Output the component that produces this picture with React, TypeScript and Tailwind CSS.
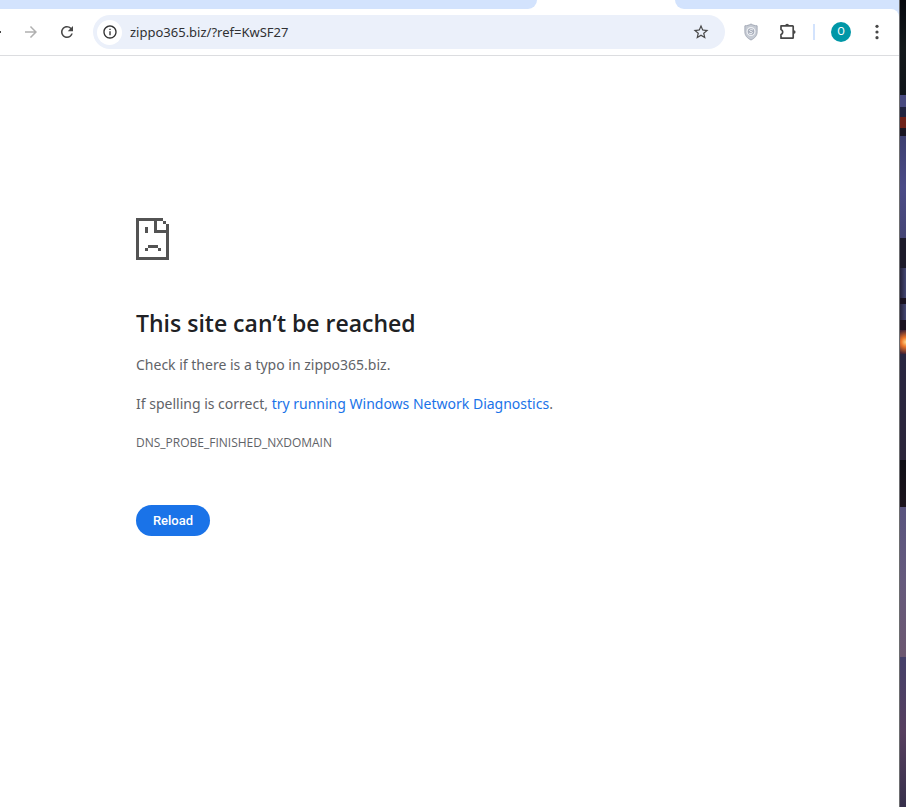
import React from 'react';
import { MdArrowForward, MdRefresh, MdInfoOutline, MdStarBorder } from 'react-icons/md';

const PuzzleIcon = () => (
  <svg viewBox="0 0 18 18" className="h-[18px] w-[18px]" fill="none" stroke="#474747" strokeWidth="1.7" strokeLinejoin="round">
    <path d="M2 2.900h11.600a.6.6 0 0 1 .6.6v11.100a.6.6 0 0 1-.6.6H2v-3.600c2.300-.8 2.300-4.300 0-5.100z" />
    <path d="M6.200 2.600a1.900 1.900 0 0 1 3.800 0zM14.800 7.300a1.800 1.800 0 0 1 0 3.600z" fill="#474747" stroke="none" />
  </svg>
);

const ShieldIcon = () => (
  <svg viewBox="0 0 14 18" className="h-[18px] w-[14px]" fill="none">
    <path d="M7 1C5 2.200 3 2.700.9 2.800v6C.9 12.600 3.200 15.200 7 17c3.800-1.800 6.100-4.400 6.100-8.200v-6C11 2.700 9 2.200 7 1z" fill="#c5cad3" stroke="#a5abb7" />
    <circle cx="7" cy="8.500" r="3.900" fill="#a8aebb" stroke="#f1f3f6" strokeWidth="1.100" />
    <path d="M9 7C7.500 6 5.500 6.700 5.500 7.700s3.200.6 3 1.900-2.400 1.300-3.600.5" stroke="#eef0f4" strokeWidth="1" />
  </svg>
);

const MenuIcon = () => (
  <svg viewBox="0 0 18 18" className="h-[18px] w-[18px]" fill="#474747">
    <circle cx="9" cy="3.300" r="1.600" />
    <circle cx="9" cy="9" r="1.600" />
    <circle cx="9" cy="14.700" r="1.600" />
  </svg>
);

const SadPageIcon = () => (
  <svg viewBox="0 0 33 42" className="h-[42px] w-[33px]" fill="#535353" shapeRendering="crispEdges">
    <path d="M0 0h27v3H3v36h27V15H18V3h3v9h9V6h3v36H0z" />
    <path d="M27 3h3v3h-3zM9 9h3v6H9zM12 27h10v3H12zM9 30h3v3H9zM22 30h3v3h-3z" />
  </svg>
);

const TabStrip = () => (
  <div className="flex h-[9px] bg-white">
    <div className="grow rounded-br-[9px] bg-[#d3e3fd]" />
    <div className="w-[138px]" />
    <div className="w-[224px] rounded-bl-[9px] bg-[#d3e3fd]" />
  </div>
);

const Toolbar = () => (
  <div className="bg-[#d3e3fd]">
    <div className="flex h-[47px] items-center rounded-tr-lg border-b border-[#dcdde0] bg-white">
      <button type="button" aria-label="Back" className="h-0.5 w-px bg-[#474747]" />
      <button type="button" aria-label="Forward" className="ml-[21px] text-[#b0b0b0]">
        <MdArrowForward size={18} />
      </button>
      <button type="button" aria-label="Reload page" className="ml-[18px] text-[#474747]">
        <MdRefresh size={18} />
      </button>
      <div className="ml-[17px] flex h-[34px] min-w-0 grow items-center rounded-full bg-[#ebf0fa] pr-[15px] pl-1">
        <button
          type="button"
          aria-label="View site information"
          className="flex h-[25px] w-[25px] shrink-0 items-center justify-center rounded-full bg-white text-[#303030]"
        >
          <MdInfoOutline size={16} />
        </button>
        <input
          type="text"
          aria-label="Address"
          defaultValue="zippo365.biz/?ref=KwSF27"
          className="ml-2 min-w-0 grow bg-transparent text-[13px] leading-5 text-[#303134] outline-none"
        />
        <button type="button" aria-label="Bookmark this page" className="text-[#474747]">
          <MdStarBorder size={18} />
        </button>
      </div>
      <button type="button" aria-label="Security extension" className="ml-[19px]">
        <ShieldIcon />
      </button>
      <button type="button" aria-label="Extensions" className="ml-[21px]">
        <PuzzleIcon />
      </button>
      <div className="ml-4 h-4 w-0.5 bg-[#d3e3fd]" />
      <button
        type="button"
        aria-label="Profile"
        className="ml-4 flex h-5 w-5 items-center justify-center rounded-full bg-[#0097a7] font-['Roboto',sans-serif] text-[11px] text-white"
      >
        O
      </button>
      <button type="button" aria-label="Menu" className="mr-[13px] ml-[17px]">
        <MenuIcon />
      </button>
    </div>
  </div>
);

const ErrorPage = () => (
  <main className="px-[136px] pt-[162px] text-sm leading-6 text-[#5f6368]">
    <SadPageIcon />
    <h1 className="mt-12 font-['Open_Sans',sans-serif] text-[23px] leading-[30px] font-semibold text-[#202124]">
      This site can’t be reached
    </h1>
    <p className="mt-[15px]">Check if there is a typo in zippo365.biz.</p>
    <p className="mt-[15px]">
      If spelling is correct,{' '}
      <a href="#diagnostics" className="text-[#1a73e8]">
        try running Windows Network Diagnostics
      </a>
      .
    </p>
    <p className="mt-[15px] font-['Open_Sans',sans-serif] text-xs leading-6">DNS_PROBE_FINISHED_NXDOMAIN</p>
    <button
      type="button"
      className="mt-[50px] h-[31px] w-[74px] rounded-full bg-[#1a73e8] font-['Roboto',sans-serif] text-[13px] leading-5 font-medium text-white"
    >
      Reload
    </button>
  </main>
);

// Sliver of the desktop wallpaper beside the window
const Wallpaper = () => (
  <div className="flex w-1.5 shrink-0 flex-col">
    <div className="h-[95px] bg-linear-to-b from-[#07090f] via-[#14191c] to-[#10151a]" />
    <div className="h-3 bg-[#484a80]" />
    <div className="h-[10px] bg-[#20233f]" />
    <div className="h-[11px] bg-[#6e2119]" />
    <div className="h-2 bg-[#191522]" />
    <div className="h-[102px] bg-linear-to-b from-[#3d3f70] via-[#4b4b87] to-[#454575]" />
    <div className="h-[30px] bg-[#1d1a2a]" />
    <div className="h-[30px] bg-linear-to-r from-[#26233b] to-[#454875]" />
    <div className="h-[6px] bg-[#1a1220]" />
    <div className="h-4 bg-linear-to-r from-[#26233b] to-[#454875]" />
    <div className="h-[10px] bg-[#1a1220]" />
    <div className="h-6 bg-[radial-gradient(circle_at_right,#ffd98a_0,#ed762a_35%,#462333_90%)]" />
    <div className="h-[106px] bg-linear-to-b from-[#292641] to-[#2c263b]" />
    <div className="h-[47px] bg-linear-to-b from-[#100f17] to-[#1c141d]" />
    <div className="h-[150px] bg-linear-to-b from-[#59547f] via-[#665a7d] to-[#6c5770]" />
    <div className="grow bg-linear-to-b from-[#45406a] via-[#573f5f] to-[#37304b]" />
  </div>
);

const App: React.FC = () => {
  return (
    <div className="flex min-h-screen font-['Noto_Sans',sans-serif]">
      <div className="min-w-0 grow border-r border-[#6d6d70] bg-white">
        <TabStrip />
        <Toolbar />
        <ErrorPage />
      </div>
      <Wallpaper />
    </div>
  );
};

export default App;
